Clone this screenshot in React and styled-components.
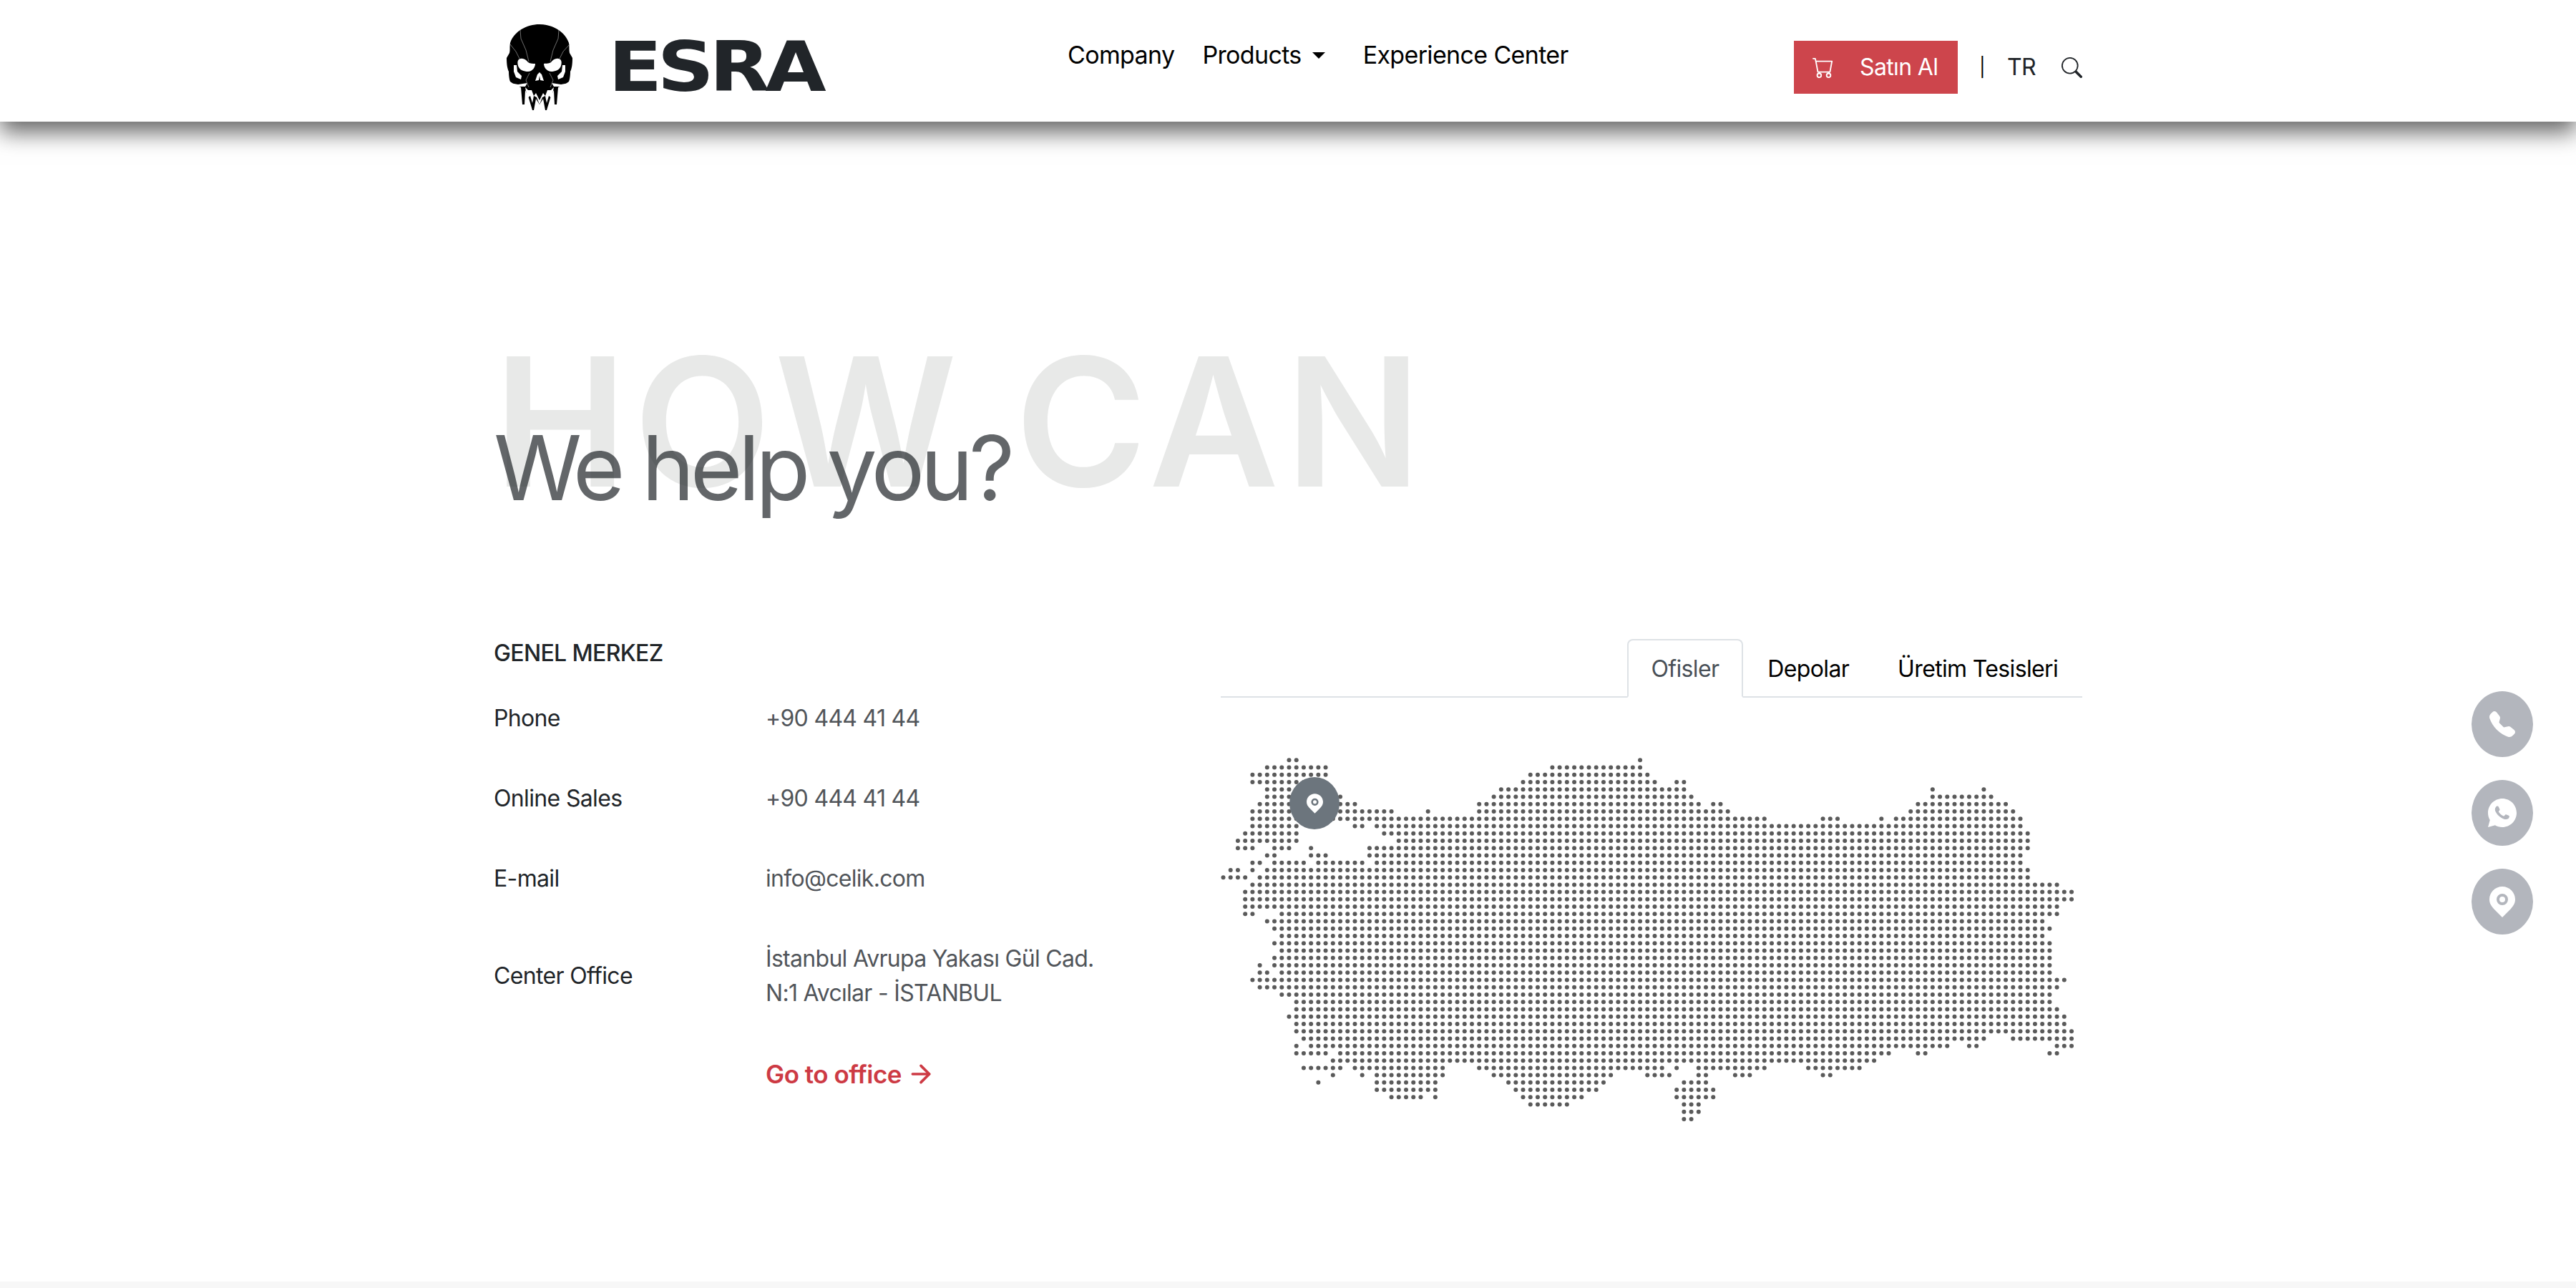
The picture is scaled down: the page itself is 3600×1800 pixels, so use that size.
import React from 'react';
import styled, { createGlobalStyle } from 'styled-components';
import { BsCart, BsSearch, BsTelephoneFill } from 'react-icons/bs';
import { RiWhatsappFill } from 'react-icons/ri';
import { ArrowRight } from 'lucide-react';

const DOT_ROWS = [
  [[9, 10], [57, 57]],
  [[6, 14], [45, 57]],
  [[4, 14], [42, 58]],
  [[4, 11], [41, 59], [62, 63]],
  [[6, 14], [38, 63], [97, 97], [104, 104]],
  [[6, 16], [37, 64], [97, 105]],
  [[5, 18], [35, 65], [67, 68], [95, 107]],
  [[4, 23], [28, 28], [35, 69], [94, 108]],
  [[4, 74], [82, 84], [90, 90], [92, 109]],
  [[4, 10], [18, 19], [21, 109]],
  [[3, 10], [22, 110]],
  [[2, 10], [24, 110]],
  [[2, 4], [7, 9], [12, 12], [20, 110]],
  [[6, 7], [12, 14], [20, 109]],
  [[4, 5], [7, 11], [13, 19], [21, 109]],
  [[1, 2], [4, 4], [6, 110]],
  [[0, 3], [5, 110]],
  [[4, 114]],
  [[3, 116]],
  [[3, 116]],
  [[3, 114]],
  [[3, 4], [8, 114]],
  [[6, 112]],
  [[7, 113]],
  [[8, 112]],
  [[7, 113]],
  [[8, 113]],
  [[7, 113]],
  [[5, 5], [7, 113]],
  [[5, 6], [8, 113]],
  [[4, 115]],
  [[5, 114]],
  [[8, 113]],
  [[10, 113]],
  [[10, 114]],
  [[9, 115]],
  [[10, 115]],
  [[10, 116]],
  [[11, 104], [108, 116]],
  [[10, 10], [12, 99], [102, 103], [114, 116]],
  [[10, 14], [16, 91], [95, 96], [113, 114]],
  [[15, 89]],
  [[11, 16], [18, 30], [35, 60], [62, 62], [65, 74], [80, 87]],
  [[15, 15], [19, 19], [21, 30], [37, 53], [58, 61], [65, 66], [70, 72], [82, 83]],
  [[13, 13], [21, 29], [39, 52], [63, 66]],
  [[21, 29], [40, 51], [62, 67]],
  [[23, 27], [29, 29], [41, 49], [62, 67]],
  [[42, 47], [63, 65]],
  [[63, 65]],
  [[63, 64]],
];

const CONTACTS = [
  { label: 'Phone', value: ['+90 444 41 44'] },
  { label: 'Online Sales', value: ['+90 444 41 44'] },
  { label: 'E-mail', value: ['info@celik.com'] },
  { label: 'Center Office', value: ['İstanbul Avrupa Yakası Gül Cad.', 'N:1 Avcılar - İSTANBUL'] },
];

const GlobalStyle = createGlobalStyle`
  html, body {
    margin: 0;
    padding: 0;
    background: #fff;
  }
  body {
    font-family: Inter, "Liberation Sans", sans-serif;
    font-size: 32px;
    line-height: 48px;
    letter-spacing: -0.65px;
    color: #212529;
  }
`;

const Header = styled.header`
  position: relative;
  z-index: 2;
  height: 170px;
  background: #fff;
  box-shadow: 0 15px 30px rgba(0, 0, 0, 0.6);
`;

const Container = styled.div`
  width: 2220px;
  margin: 0 auto;
`;

const HeaderRow = styled(Container)`
  display: flex;
  box-sizing: border-box;
  height: 170px;
  padding-top: 18px;
`;

const Logo = styled.a`
  display: flex;
  align-items: center;
  gap: 50px;
  width: 802px;
  padding-left: 18px;
  box-sizing: border-box;
`;

const Wordmark = styled.span`
  font-family: "DejaVu Sans", sans-serif;
  font-weight: 700;
  font-size: 96px;
  line-height: 96px;
  letter-spacing: -6px;
  color: #212529;
  transform: scaleX(1.15);
  transform-origin: left center;
`;

const Nav = styled.nav`
  display: flex;
  gap: 39px;
  margin-top: 35px;
  height: 48px;
`;

const NavLink = styled.a`
  display: flex;
  align-items: center;
  color: #000;
  font-size: 34px;
`;

const Caret = styled.span`
  width: 0;
  height: 0;
  margin: 0 14px 0 15px;
  border-top: 9px solid #000;
  border-left: 9px solid transparent;
  border-right: 9px solid transparent;
`;

const HeaderActions = styled.div`
  display: flex;
  align-items: center;
  height: 74px;
  margin-top: 39px;
  margin-left: auto;
  color: #212529;
`;

const BuyButton = styled.a`
  display: flex;
  align-items: center;
  gap: 36px;
  width: 229px;
  height: 74px;
  padding-left: 26px;
  box-sizing: border-box;
  background: #cd454c;
  color: #fff;
  font-size: 32px;
  svg {
    width: 30px;
    height: 30px;
  }
`;

const Divider = styled.span`
  margin: 0 31px 0 30px;
  font-size: 26px;
  color: #000;
`;

const SearchIcon = styled(BsSearch)`
  width: 29px;
  height: 29px;
  margin-left: 36px;
`;

const Hero = styled(Container)`
  padding-top: 283px;
`;

const BackTitle = styled.div`
  font-size: 250px;
  line-height: 272px;
  font-weight: 600;
  letter-spacing: 9px;
  color: #e8e9e8;
`;

const Title = styled.h1`
  margin: -146px 0 0;
  font-size: 125px;
  line-height: 150px;
  font-weight: 400;
  letter-spacing: -6px;
  color: rgba(33, 37, 41, 0.7);
`;

const Content = styled(Container)`
  display: grid;
  grid-template-columns: 1016px 1204px;
  margin-top: 160px;
`;

const Heading = styled.div`
  margin-bottom: 43px;
  font-weight: 500;
`;

const ContactGrid = styled.div`
  display: grid;
  grid-template-columns: 380px 1fr;
  row-gap: 64px;
  align-items: center;
`;

const Label = styled.div`
  color: #212529;
`;

const Value = styled.div`
  letter-spacing: -0.7px;
  color: #51555a;
`;

const GoLink = styled.a`
  grid-column: 2;
  display: flex;
  align-items: center;
  gap: 7px;
  padding-top: 1px;
  font-size: 35px;
  letter-spacing: -0.5px;
  font-weight: 600;
  color: #cd3a44;
`;

const Tabs = styled.div`
  display: flex;
  justify-content: flex-end;
  margin-top: 4px;
  border-bottom: 2px solid #dee2e6;
`;

const Tab = styled.a`
  padding: 16px 32px 14px;
  margin-bottom: -2px;
  border: 2px solid ${(p) => (p.$active ? '#dee2e6' : 'transparent')};
  border-bottom-color: ${(p) => (p.$active ? '#fff' : 'transparent')};
  border-radius: 8px 8px 0 0;
  color: ${(p) => (p.$active ? '#495057' : '#000')};
`;

const MapWrap = styled.div`
  position: relative;
  margin-top: 83px;
  height: 520px;
`;

const DotMap = styled.svg`
  display: block;
  filter: blur(0.6px);
`;

const MapPin = styled.div`
  position: absolute;
  left: 96px;
  top: 28px;
  display: flex;
  align-items: center;
  justify-content: center;
  width: 70px;
  height: 73px;
  border-radius: 50%;
  background: #6c757d;
`;

const SideButtons = styled.div`
  position: fixed;
  right: 60px;
  top: 966px;
  display: flex;
  flex-direction: column;
  gap: 32px;
`;

const SideButton = styled.a`
  display: flex;
  align-items: center;
  justify-content: center;
  width: 86px;
  height: 92px;
  border-radius: 50%;
  background: #b3b6bd;
  color: #fff;
`;

const Footer = styled.footer`
  height: 9px;
  background: #f7f7f7;
`;

const Main = styled.main`
  height: 1621px;
`;

function Skull() {
  return (
    <svg width="92" height="120" viewBox="0 0 92 120">
      <path
        fill="#000"
        d="M46 0C28 0 10 10 5 26C4 32 5 36 4 40L0 47C0 56 1 62 3 66C3 72 4 78 5 80L12 85L20 88L22 112L25 112L26 92L30 100L36 120L38 120L41 104L46 112L51 104L54 120L56 120L62 100L66 92L67 112L70 112L72 88L80 85L87 80C88 78 89 72 89 66C91 62 92 56 92 47L88 40C87 36 88 32 87 26C82 10 64 0 46 0Z"
      />
      <g fill="#fff">
        <path d="M17 49C22 46 27 49 30 53C33 55 37 55 40 55C40 60 36 66 30 66C24 66 18 64 16 58C15 54 15 51 17 49Z" />
        <path d="M75 49C70 46 65 49 62 53C59 55 55 55 52 55C52 60 56 66 62 66C68 66 74 64 76 58C77 54 77 51 75 49Z" />
        <path d="M43 70L46 67L49 70L52 79L47 78L46 72L45 78L40 79Z" />
        <path d="M10 57L14 57L15 66L21 72L20 77L13 74L10 66Z" />
        <path d="M82 57L78 57L77 66L71 72L72 77L79 74L82 66Z" />
        <path d="M5 82L16 84L29 82L26 87L14 87Z" />
        <path d="M87 82L76 84L63 82L66 87L78 87Z" />
        <path d="M26 88L30 92L35 92L38 100L41 96L46 106L51 96L54 100L57 92L62 92L66 88L63 103L59 100L56 110L54 100L50 102L46 112L42 102L38 100L36 110L33 100L29 103Z" />
      </g>
      <g fill="none" stroke="#8a8a8a" strokeWidth="0.8">
        <path d="M19 8L20 20L27 36L31 52" />
        <path d="M73 8L72 20L65 36L61 52" />
        <path d="M5 28L13 38L18 48M88 28L79 38L74 48" />
        <path d="M32 68L27 78L31 88M60 68L65 78L61 88" />
      </g>
    </svg>
  );
}

function PinIcon({ width, height }) {
  return (
    <svg width={width} height={height} viewBox="0 0 36 43">
      <path
        fill="#fff"
        fillRule="evenodd"
        d="M18 0C8 0 0 8 0 18C0 24 3 27 6 31L18 43L30 31C33 27 36 24 36 18C36 8 28 0 18 0ZM18 10A8 8 0 1 1 18 26A8 8 0 1 1 18 10ZM18 14A4 4 0 1 0 18 22A4 4 0 1 0 18 14Z"
      />
    </svg>
  );
}

function TurkeyMap() {
  const dots = [];
  DOT_ROWS.forEach((spans, r) => {
    spans.forEach(([from, to]) => {
      for (let c = from; c <= to; c++) {
        dots.push(<circle key={`${r}-${c}`} cx={3.5 + c * 10.22} cy={4.3 + r * 10.24} r="3" />);
      }
    });
  });
  return (
    <DotMap width="1204" height="520" viewBox="0 0 1204 520" fill="#5a5a5a">
      {dots}
    </DotMap>
  );
}

export default function App() {
  return (
    <>
      <GlobalStyle />
      <Header>
        <HeaderRow>
          <Logo>
            <Skull />
            <Wordmark>ESRA</Wordmark>
          </Logo>
          <Nav>
            <NavLink>Company</NavLink>
            <NavLink>
              Products
              <Caret />
            </NavLink>
            <NavLink>Experience Center</NavLink>
          </Nav>
          <HeaderActions>
            <BuyButton>
              <BsCart />
              Satın Al
            </BuyButton>
            <Divider>|</Divider>
            <span>TR</span>
            <SearchIcon />
          </HeaderActions>
        </HeaderRow>
      </Header>
      <Main>
        <Hero>
          <BackTitle>HOW CAN</BackTitle>
          <Title>We help you?</Title>
        </Hero>
        <Content>
          <div>
            <Heading>GENEL MERKEZ</Heading>
            <ContactGrid>
              {CONTACTS.map((item) => (
                <React.Fragment key={item.label}>
                  <Label>{item.label}</Label>
                  <Value>
                    {item.value.map((line) => (
                      <div key={line}>{line}</div>
                    ))}
                  </Value>
                </React.Fragment>
              ))}
              <GoLink>
                Go to office
                <ArrowRight size={40} strokeWidth={2.2} />
              </GoLink>
            </ContactGrid>
          </div>
          <div>
            <Tabs>
              <Tab $active>Ofisler</Tab>
              <Tab>Depolar</Tab>
              <Tab>Üretim Tesisleri</Tab>
            </Tabs>
            <MapWrap>
              <TurkeyMap />
              <MapPin>
                <PinIcon width={23} height={28} />
              </MapPin>
            </MapWrap>
          </div>
        </Content>
      </Main>
      <SideButtons>
        <SideButton>
          <BsTelephoneFill size={36} />
        </SideButton>
        <SideButton>
          <RiWhatsappFill size={48} />
        </SideButton>
        <SideButton>
          <PinIcon width={36} height={43} />
        </SideButton>
      </SideButtons>
      <Footer />
    </>
  );
}
